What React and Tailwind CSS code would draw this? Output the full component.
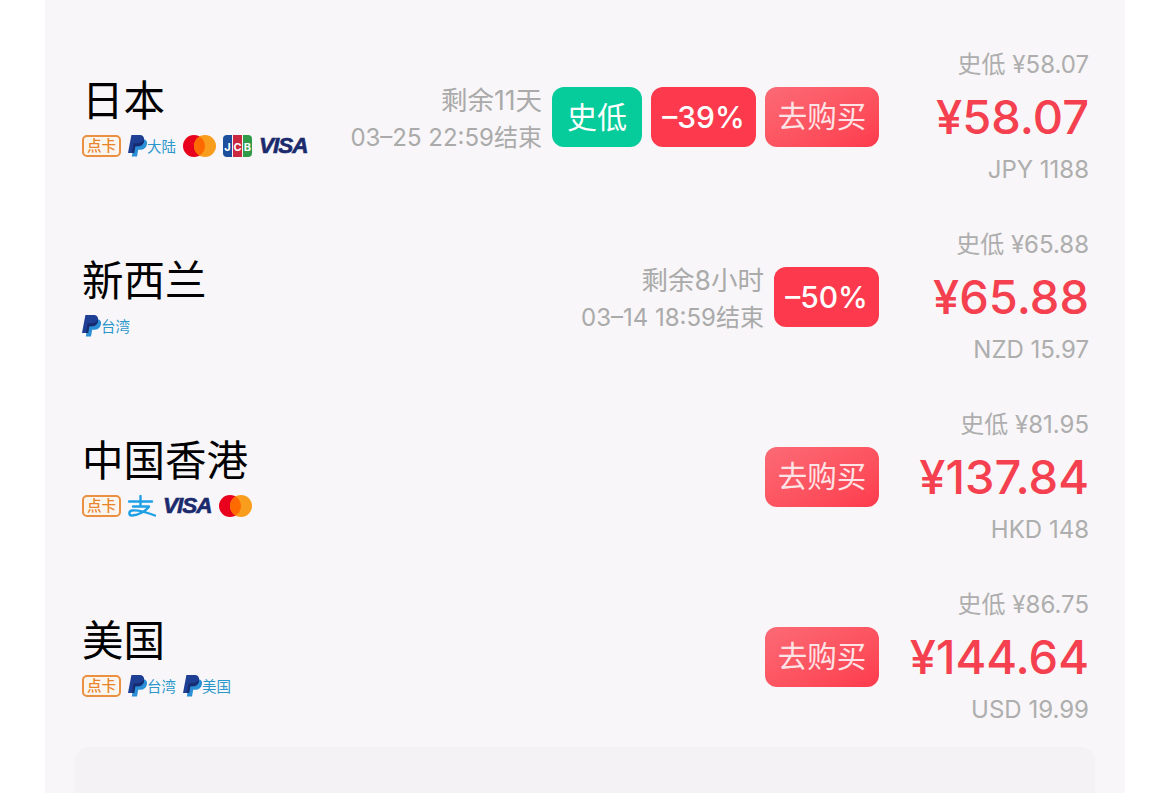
const PP = () => (
  <svg width="19" height="22" viewBox="0 0 19 22" className="shrink-0">
    <path d="M7 4h7.200c3.600 0 5.300 2 4.700 5.300-.6 3.600-3 5.500-6.600 5.500H10.200L9 21.500H3.800z" fill="#2a8fd6" />
    <path d="M3.400 0h7.800c3.600 0 5.400 2 4.800 5.300-.7 3.800-3.200 5.900-6.800 5.900H7l-1.200 6.800H0z" fill="#1f3f95" />
    <path d="M3.800 18l1.800-9.400 1-.4h2.600c3 0 5.600-1.400 6.800-3.800.6 3.800-2.200 6.800-5.800 6.800H7.400l-1.200 6.800z" fill="#172c70" />
  </svg>
);
const Region = ({ t }) => (
  <span className="flex items-center">
    <PP />
    <span className="mt-[3px] text-[14.500px] leading-none text-[#2a97cc]">{t}</span>
  </span>
);
const Card = () => (
  <span className="flex items-center justify-center w-[39px] h-[22px] rounded-[5px] border-2 border-[#ea9040] text-[14.500px] font-medium leading-none text-[#e8842a] bg-[#fbf5ef]">点卡</span>
);
const Master = () => (
  <svg width="33" height="22" viewBox="0 0 33 22">
    <circle cx="11" cy="11" r="11" fill="#e8001c" />
    <circle cx="22" cy="11" r="11" fill="#f99d1c" />
    <path d="M16.500 1.500a11 11 0 0 1 0 19a11 11 0 0 1 0-19z" fill="#ff6a00" />
  </svg>
);
const Jcb = () => (
  <span className="flex h-[22px] w-[29px] gap-[1px] text-[11px] font-bold leading-[24px] text-white text-center">
    <span className="flex-1 rounded-l-[4px] bg-[#1c4f9c]">J</span>
    <span className="flex-1 bg-[#c9283e]">C</span>
    <span className="flex-1 rounded-r-[4px] bg-[#2f9a48]">B</span>
  </span>
);
const Visa = () => (
  <span className="text-[22.500px] leading-[22px] font-bold italic tracking-[-1px] text-[#1a2a6c] [-webkit-text-stroke:0.6px_#1a2a6c] font-['Liberation_Sans',sans-serif]">VISA</span>
);
const Ali = () => (
  <svg width="28" height="22" viewBox="0 0 28 22" fill="none" stroke="#1ea0e6" strokeWidth="2.400" strokeLinecap="round" strokeLinejoin="round">
    <path d="M1 6.500h23M12.500 1v10M5 11.500h16C18 16 11 20 4 20.500c-3.500 0-3.500-4.500 0-5 7-1 15 2 23 5" />
  </svg>
);
const Tag = ({ c, w, children }) => (
  <span className={`flex items-center justify-center h-[60px] rounded-[12px] text-white text-[30px] leading-none ${w} ${c}`}>{children}</span>
);
const Buy = () => (
  <span className="flex items-center justify-center h-[60px] w-[114px] rounded-[12px] bg-gradient-to-br from-[#fb6a75] to-[#fd3a4d] text-[#fde3e5] text-[29.500px] leading-none">去购买</span>
);

const rows = [
  { name: '日本', icons: [<Card />, <Region t="大陆" />, <Master />, <Jcb />, <Visa />], l1: '剩余11天', l2: '03–25 22:59结束', low: '¥58.07', price: '¥58.07', cur: 'JPY 1188', hist: true, off: '–39%', buy: true },
  { name: '新西兰', icons: [<Region t="台湾" />], l1: '剩余8小时', l2: '03–14 18:59结束', low: '¥65.88', price: '¥65.88', cur: 'NZD 15.97', off: '–50%' },
  { name: '中国香港', icons: [<Card />, <Ali />, <Visa />, <Master />], low: '¥81.95', price: '¥137.84', cur: 'HKD 148', buy: true },
  { name: '美国', icons: [<Card />, <Region t="台湾" />, <Region t="美国" />], low: '¥86.75', price: '¥144.64', cur: 'USD 19.99', buy: true },
];

export default function App() {
  return (
    <div className="h-[793px] overflow-hidden bg-white font-['Inter','Noto_Sans_CJK_SC',sans-serif]">
      <div className="mx-[45px] h-full bg-[#f8f6f8] pt-[27px]">
        {rows.map((r) => (
          <div key={r.name} className="flex h-[180px] items-center justify-between pl-[37px] pr-[36px]">
            <div className="flex flex-col">
              <div className="text-[41.500px] leading-[50px] text-black -translate-y-[1px]">{r.name}</div>
              <div className="mt-[8px] flex h-[22px] items-center gap-[7px]">
                {r.icons.map((ic, i) => <span key={i} className="flex">{ic}</span>)}
              </div>
            </div>
            <div className="flex items-center">
              <div className="-ml-[1px] flex items-center gap-[9px]">
                {r.l1 && (
                  <div className="mr-[1px] pt-[3px] text-right text-[26.500px] leading-[38px] text-[#aaaaaa]">
                    <div>{r.l1}</div>
                    <div className="text-[24px]">{r.l2}</div>
                  </div>
                )}
                {r.hist && <Tag c="bg-[#06cc9b]" w="w-[90px]">史低</Tag>}
                {r.off && <Tag c="bg-[#fd3a4d] font-medium" w="w-[105px]">{r.off}</Tag>}
                {r.buy && <Buy />}
              </div>
              <div className="w-[210px] text-right">
                <div className="text-[24px] leading-[30px] text-[#aeaeae]">史低 {r.low}</div>
                <div className="my-[9px] text-[47px] leading-[56px] font-medium text-[#f4404f]">{r.price}</div>
                <div className="translate-y-[1px] text-[24px] leading-[30px] text-[#aeaeae]">{r.cur}</div>
              </div>
            </div>
          </div>
        ))}
        <div className="mx-[30px] h-[60px] rounded-t-[14px] bg-[#f4f2f4]" />
      </div>
    </div>
  );
}
